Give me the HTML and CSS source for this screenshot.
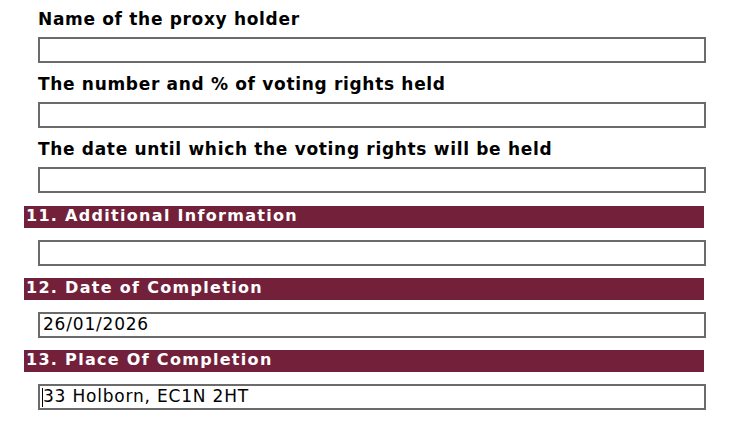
FILE: index.html
```html
<!DOCTYPE html>
<html>
<head>
<meta charset="utf-8">
<link rel="stylesheet" href="styles.css">
</head>
<body>
<div class="form">
  <div class="field">
    <div class="label">Name of the proxy holder</div>
    <div class="input"></div>
  </div>
  <div class="field">
    <div class="label">The number and % of voting rights held</div>
    <div class="input"></div>
  </div>
  <div class="field">
    <div class="label">The date until which the voting rights will be held</div>
    <div class="input"></div>
  </div>
  <div class="section">
    <div class="bar">11. Additional Information</div>
    <div class="input"></div>
  </div>
  <div class="section">
    <div class="bar">12. Date of Completion</div>
    <div class="input">26/01/2026</div>
  </div>
  <div class="section">
    <div class="bar">13. Place Of Completion</div>
    <div class="input"><span class="caret"></span>33 Holborn, EC1N 2HT</div>
  </div>
</div>
</body>
</html>
```
FILE: styles.css
```css
html, body {
  margin: 0;
  padding: 0;
  background: #ffffff;
}
.form {
  width: 680px;
  margin-left: 24px;
  font-family: "DejaVu Sans", Verdana, sans-serif;
  display: flex;
  flex-direction: column;
}
.field {
  display: flex;
  flex-direction: column;
}
.field + .field {
  margin-top: 2px;
}
.label {
  margin-left: 14px;
  padding-top: 9px;
  height: 21px;
  line-height: 21px;
  margin-bottom: 7px;
  font-size: 17px;
  letter-spacing: 0.68px;
  font-weight: bold;
  color: #000;
  white-space: nowrap;
}
.input {
  margin-left: 14px;
  width: 668px;
  height: 26px;
  box-sizing: border-box;
  border: 2px solid #6b6b6b;
  padding-left: 3px;
  font-size: 17px;
  letter-spacing: 0.8px;
  line-height: 21px;
  color: #000;
  position: relative;
  white-space: nowrap;
}
.caret {
  position: absolute;
  left: 2px;
  top: 2px;
  width: 1px;
  height: 19px;
  background: #000;
}
.section {
  display: flex;
  flex-direction: column;
  margin-top: 13px;
}
.section + .section {
  margin-top: 12px;
}
.bar {
  background: #73213b;
  color: #ffffff;
  height: 22px;
  line-height: 20px;
  font-size: 16px;
  letter-spacing: 1.3px;
  font-weight: bold;
  padding-left: 2px;
  margin-bottom: 12px;
  white-space: nowrap;
}
```
